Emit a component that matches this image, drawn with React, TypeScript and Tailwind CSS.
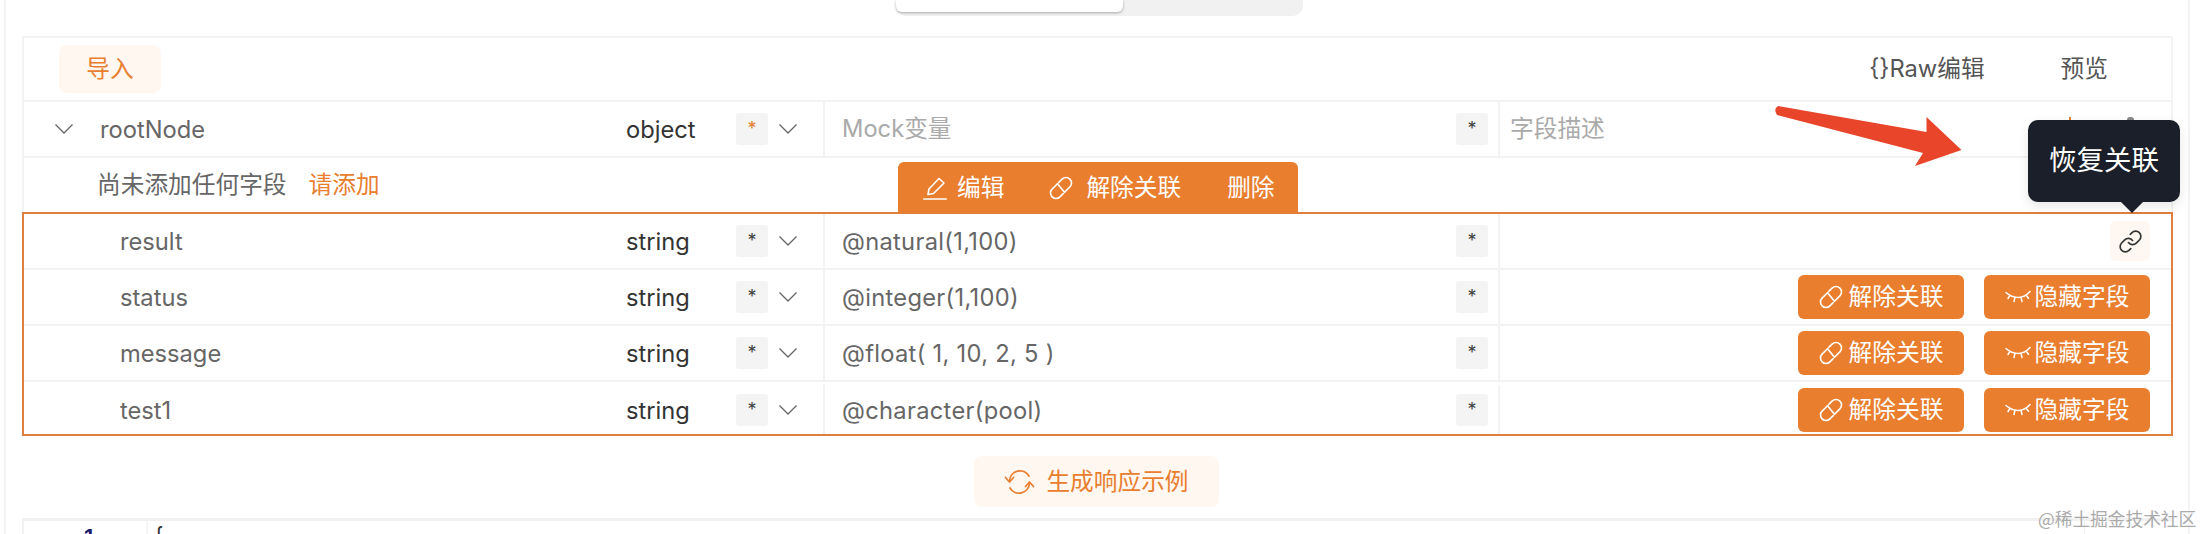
import React from 'react'
import { Link } from 'lucide-react'

const cjk = "font-['Inter','Noto_Sans_CJK_SC',sans-serif]"

const fields = [
  { name: 'status', mock: '@integer(1,100)' },
  { name: 'message', mock: '@float( 1, 10, 2, 5 )' },
  { name: 'test1', mock: '@character(pool)' },
]

const Star = ({ orange }: { orange?: boolean }) => (
  <span className={`flex h-8 w-8 items-center justify-center rounded-[3px] bg-[#f4f4f4] text-[18px] ${orange ? 'text-[#e97e2f]' : 'text-[#444]'}`}>*</span>
)

const Chevron = ({ className }: { className?: string }) => (
  <svg className={className} width='18' height='10' viewBox='0 0 18 10' fill='none' stroke='#666' strokeWidth='1.3'>
    <path d='M0.500 0.500 9 9 17.500 0.500' />
  </svg>
)

const BrokenLink = ({ className }: { className?: string }) => (
  <svg className={className} width='24' height='24' viewBox='0 0 24 24' fill='none' stroke='white' strokeWidth='1.6' strokeLinecap='round'>
    <path d='M9.800 6.400 13.100 3.100A5.500 5.500 0 0 1 20.900 10.900L15.500 16.300' />
    <path d='M14.200 17.600 10.900 20.900A5.500 5.500 0 0 1 3.100 13.100L8.500 7.700' />
    <path d='M8.500 7.700 15.500 16.300' />
  </svg>
)

const Pencil = () => (
  <svg width='24' height='24' viewBox='0 0 24 24' fill='none' stroke='white' strokeWidth='1.6' strokeLinecap='round' strokeLinejoin='round'>
    <path d='M5 18.500 6 13 16 2.500 21 7 10.500 17.500Z' />
    <path d='M0.800 23H23.200' />
  </svg>
)

const Sync = () => (
  <svg width='31' height='26' viewBox='0 0 31 26' fill='none' stroke='#e97e2f' strokeWidth='1.8' strokeLinecap='round' strokeLinejoin='round'>
    <path d='M5.500 12A10.500 10.500 0 0 1 25 7' />
    <path d='M1.500 8.500 5.500 13 9.500 8.500' />
    <path d='M25.500 14A10.500 10.500 0 0 1 6 19' />
    <path d='M21.500 17.500 25.500 13 29.500 17.500' />
  </svg>
)

const EyeClosed = () => (
  <svg width='26' height='14' viewBox='0 0 26 14' fill='none' stroke='white' strokeWidth='1.5' strokeLinecap='round'>
    <path d='M1 2.500C5 6 9 7.500 13 7.500S21 6 25 1.500' />
    <path d='M5 5.300 3 8.500M10 7.200 9 11.500M16 7.200l1 4.300M21 5.300l2.500 3' />
  </svg>
)

const Row = ({ name, mock, children }: { name: string; mock: string; children?: React.ReactNode }) => (
  <div className='flex h-[56px] border-b-2 border-[#f3f3f3] last:h-[52px] last:border-b-0 last:pt-[3px]'>
    <div className='flex w-[799px] shrink-0 items-center'>
      <span className='w-[602px] pl-[96px] pt-[2px] text-[#666]'>{name}</span>
      <span className='w-[110px] pt-[2px] text-[#333]'>string</span>
      <Star />
      <Chevron className='ml-[11px]' />
    </div>
    <div className='flex w-[675px] shrink-0 items-center justify-between border-l-2 border-[#f3f3f3] pl-[17px] pr-[10px] text-[#666]'>
      <span className='pt-[2px] tracking-[0.3px]'>{mock}</span>
      <Star />
    </div>
    <div className='flex flex-1 items-center justify-end gap-[20px] border-l-2 border-[#f3f3f3] pr-[21px]'>{children}</div>
  </div>
)

const ActionButton = ({ icon, label }: { icon: React.ReactNode; label: string }) => (
  <button className='flex h-[44px] w-[166px] items-center justify-center gap-[4px] rounded-[6px] bg-[#e97e2f] text-white'>
    {icon}
    {label}
  </button>
)

const App = () => {
  return (
    <div className={`relative h-[534px] w-[2204px] overflow-hidden bg-white text-[23.7px] leading-none ${cjk}`}>
      <div className='mx-[4px] h-full w-[2186px] border-x-2 border-[#f3f3f3] px-[16px]'>

        <div className='flex h-[36px] pl-[874px]'>
          <div className='flex h-[16px] w-[407px] items-start rounded-b-[10px] bg-[#f1f1f1]'>
            <div className='h-[12px] w-[227px] rounded-b-[6px] bg-white shadow-[0_1px_3px_rgba(0,0,0,0.3)]'></div>
          </div>
        </div>

        <div className='w-[2151px] border-2 border-b-0 border-[#f3f3f3]'>
          <div className='flex h-[64px] items-center justify-between border-b-2 border-[#f3f3f3] pl-[35px] pr-[63px]'>
            <button className='h-[48px] w-[102px] rounded-[8px] bg-[#fff7f0] text-[#e97e2f]'>导入</button>
            <div className='flex gap-[76px] text-[#555]'>
              <span>{'{}'}Raw编辑</span>
              <span>预览</span>
            </div>
          </div>

          <div className='flex h-[56px] border-b-2 border-[#f3f3f3]'>
            <div className='flex w-[799px] shrink-0 items-center'>
              <Chevron className='ml-[31px]' />
              <span className='ml-[27px] w-[526px] pt-[2px] text-[#666]'>rootNode</span>
              <span className='w-[110px] pt-[2px] text-[#333]'>object</span>
              <Star orange />
              <Chevron className='ml-[11px]' />
            </div>
            <div className='flex w-[675px] shrink-0 items-center justify-between border-l-2 border-[#f3f3f3] pl-[17px] pr-[10px] text-[#aaa]'>
              <span>Mock变量</span>
              <Star />
            </div>
            <div className='flex flex-1 items-center border-l-2 border-[#f3f3f3] pl-[10px] text-[#aaa]'>字段描述</div>
          </div>

          <div className='flex h-[54px] items-center pl-[73px] text-[#666]'>
            尚未添加任何字段
            <span className='ml-[22px] text-[#e97e2f]'>请添加</span>
          </div>
        </div>

        <div className='w-[2151px] border-2 border-[#dd7f3f]'>
          <Row name='result' mock='@natural(1,100)'>
            <button className='flex h-[40px] w-[40px] items-center justify-center rounded-[6px] bg-[#fff8f2] text-[#333]'>
              <Link size={25} strokeWidth={1.6} />
            </button>
          </Row>
          {fields.map((f) => (
            <Row key={f.name} name={f.name} mock={f.mock}>
              <ActionButton icon={<BrokenLink className='mr-[2px]' />} label='解除关联' />
              <ActionButton icon={<EyeClosed />} label='隐藏字段' />
            </Row>
          ))}
        </div>

        <div className='flex h-[82px] w-[2151px] items-start justify-center pr-[2px] pt-[20px]'>
          <button className='flex h-[51px] w-[245px] items-center justify-center gap-[11px] rounded-[8px] bg-[#fff7f0] text-[#e97e2f]'>
            <Sync />
            生成响应示例
          </button>
        </div>

        <div className='flex h-[20px] w-[2151px] border-l-2 border-t-[3px] border-[#f1f1f1]'>
          <div className='w-[122px] pl-[60px] pt-[5px] text-[22px] font-semibold text-[#1a1a6e]'>1</div>
          <div className='flex-1 border-l-2 border-[#f5f5f5] pl-[6px] pt-[3px] text-[22px] text-[#333]'>{'{'}</div>
          <div className='w-[89px] border-l border-[#eeeeee]'></div>
        </div>
      </div>

      {/* hover toolbar on the selected group */}
      <div className='absolute left-[898px] top-[162px] flex h-[51px] w-[400px] items-center rounded-t-[6px] bg-[#e97e2f] pl-[25px] text-white'>
        <Pencil />
        <span className='ml-[10px]'>编辑</span>
        <BrokenLink className='ml-[45px]' />
        <span className='ml-[13px]'>解除关联</span>
        <span className='ml-[46px]'>删除</span>
      </div>

      {/* row icons peeking out above the tooltip */}
      <div className='absolute left-[2069px] top-[117px] h-[4px] w-[2px] bg-[#e97e2f]'></div>
      <div className='absolute left-[2127px] top-[117px] h-[4px] w-[7px] rounded-t-[3px] bg-[#888]'></div>

      {/* tooltip */}
      <div className='absolute left-[2028px] top-[120px] flex h-[82px] w-[152px] items-center justify-center rounded-[10px] bg-[#1b1f29] text-[27.500px] text-white shadow-[0_4px_12px_rgba(0,0,0,0.1)]'>
        恢复关联
        <div className='absolute left-[92px] top-[81px] h-0 w-0 border-x-[12px] border-t-[12px] border-x-transparent border-t-[#1b1f29]'></div>
      </div>

      {/* red annotation arrow */}
      <svg className='absolute left-[1770px] top-[100px]' width='200' height='70' viewBox='0 0 200 70'>
        <path d='M8 6 L156.500 32 L156.500 17 L191.500 50 L145 66 L153 53 L7 15 Q3 9 8 6Z' fill='#e8452a' />
      </svg>

      <span className="absolute left-[2038px] top-[508px] font-['Noto_Sans_CJK_SC',sans-serif] text-[17.700px] leading-[20px] text-[#aaa]">@稀土掘金技术社区</span>
    </div>
  )
}

export default App
